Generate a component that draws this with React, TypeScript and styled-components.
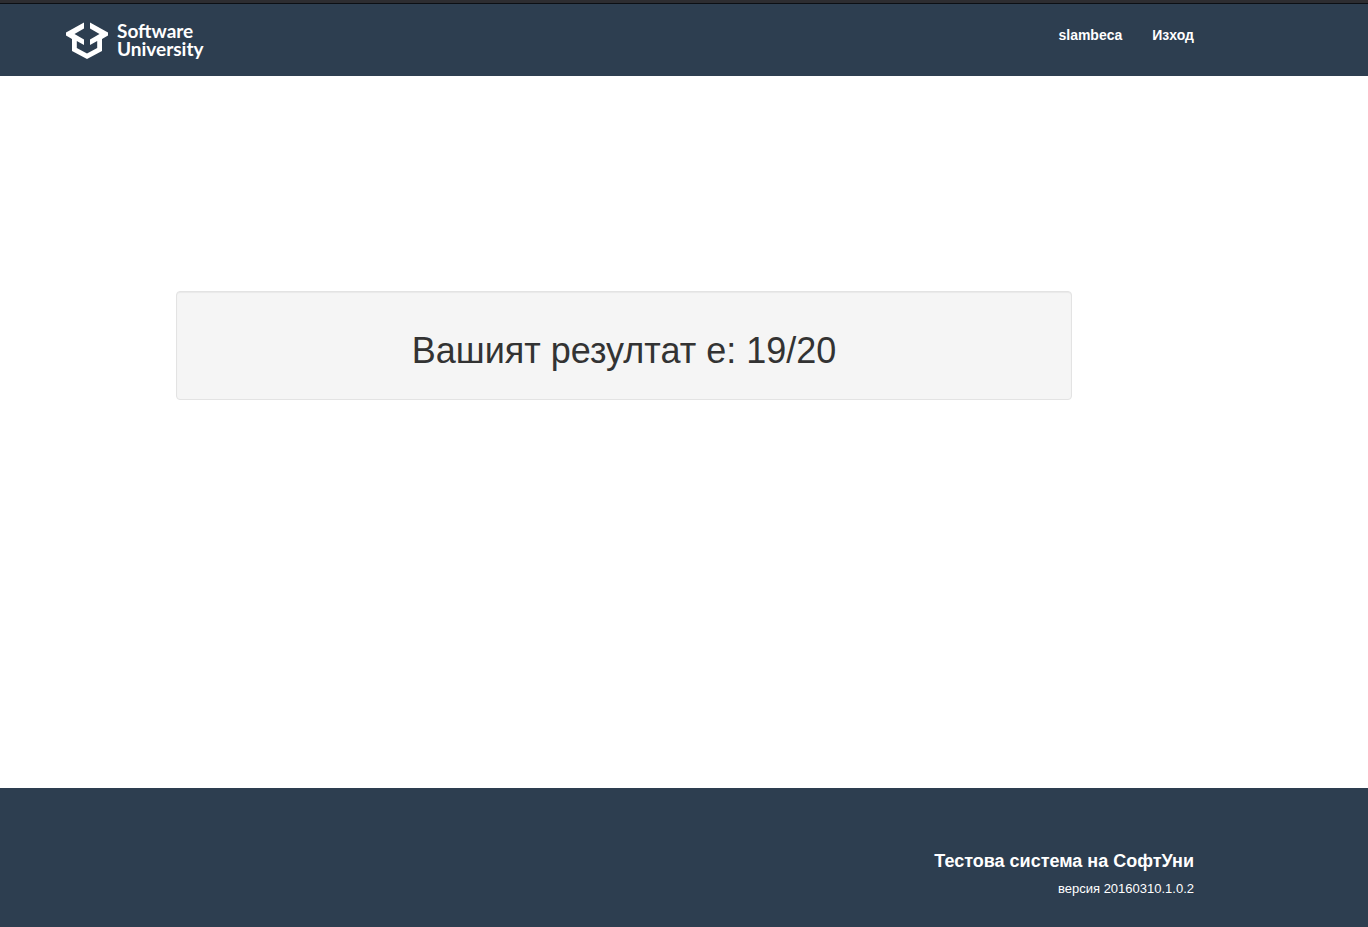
import React from "react";
import styled, { createGlobalStyle } from "styled-components";

const GlobalStyle = createGlobalStyle`
  *, *::before, *::after { box-sizing: border-box; }
  html, body, #root { height: 100%; }
  body {
    margin: 0;
    background: #fff;
    color: #333;
    font-family: "Liberation Sans", Arial, sans-serif;
    font-size: 14px;
    line-height: 20px;
  }
`;

const Page = styled.div`
  min-height: 100%;
  display: flex;
  flex-direction: column;
`;

const Header = styled.header`
  border-top: 3px solid #2d2d31;
  background: #2d3e50;
`;

const HeaderEdge = styled.div`
  height: 1px;
  background: #0c0f14;
`;

const Container = styled.div`
  width: 100%;
  padding: 0 174px 0 54px;
`;

const NavBar = styled(Container)`
  display: flex;
  justify-content: space-between;
  align-items: flex-start;
  height: 72px;
`;

const Brand = styled.a`
  display: flex;
  gap: 8px;
  padding: 18px 0 0 11px;
  color: #fff;
  text-decoration: none;
`;

const BrandName = styled.span`
  font-family: Lato, sans-serif;
  font-size: 19px;
  font-weight: 700;
  line-height: 18px;
`;

const Menu = styled.nav`
  display: flex;
  gap: 30px;
  padding-top: 21px;
`;

const MenuLink = styled.a`
  color: #fff;
  font-size: 14px;
  font-weight: 700;
  text-decoration: none;
`;

const Main = styled.main`
  flex: 1;
  padding: 215px 296px 0 176px;
`;

const Well = styled.section`
  padding: 39px 19px 29px;
  border: 1px solid #e3e3e3;
  border-radius: 4px;
  background: #f5f5f5;
  box-shadow: inset 0 1px 1px rgba(0, 0, 0, 0.05);
  text-align: center;
`;

const Result = styled.h1`
  margin: 0;
  font-size: 36px;
  font-weight: 400;
  line-height: 39px;
`;

const Footer = styled.footer`
  padding: 63px 0 28px;
  background: #2d3e50;
  color: #fff;
  text-align: right;
`;

const FooterTitle = styled.h2`
  margin: 0 0 8px;
  font-size: 18px;
  font-weight: 700;
  line-height: 20px;
`;

const Version = styled.p`
  margin: 0;
  font-size: 13px;
  line-height: 20px;
`;

const LogoMark = () => (
  <svg width="44" height="38" viewBox="0 0 44 38" fill="#fff" aria-hidden="true">
    <path d="M19 0.500V6.500L9.500 12L19 17.500V23L11.800 19V26L22 31.500L32.200 26V19L25 23V17.500L34.500 12L25 6.500V0.500L43 10.500V13.500L37 17V29L22 37L7 29V17L1 13.500V10.500Z" />
  </svg>
);

export default function App() {
  return (
    <>
      <GlobalStyle />
      <Page>
        <Header>
          <HeaderEdge />
          <NavBar>
            <Brand href="#">
              <LogoMark />
              <BrandName>
                Software
                <br />
                University
              </BrandName>
            </Brand>
            <Menu>
              <MenuLink href="#">slambeca</MenuLink>
              <MenuLink href="#">Изход</MenuLink>
            </Menu>
          </NavBar>
        </Header>
        <Main>
          <Well>
            <Result>Вашият резултат е: 19/20</Result>
          </Well>
        </Main>
        <Footer>
          <Container>
            <FooterTitle>Тестова система на СофтУни</FooterTitle>
            <Version>версия 20160310.1.0.2</Version>
          </Container>
        </Footer>
      </Page>
    </>
  );
}
